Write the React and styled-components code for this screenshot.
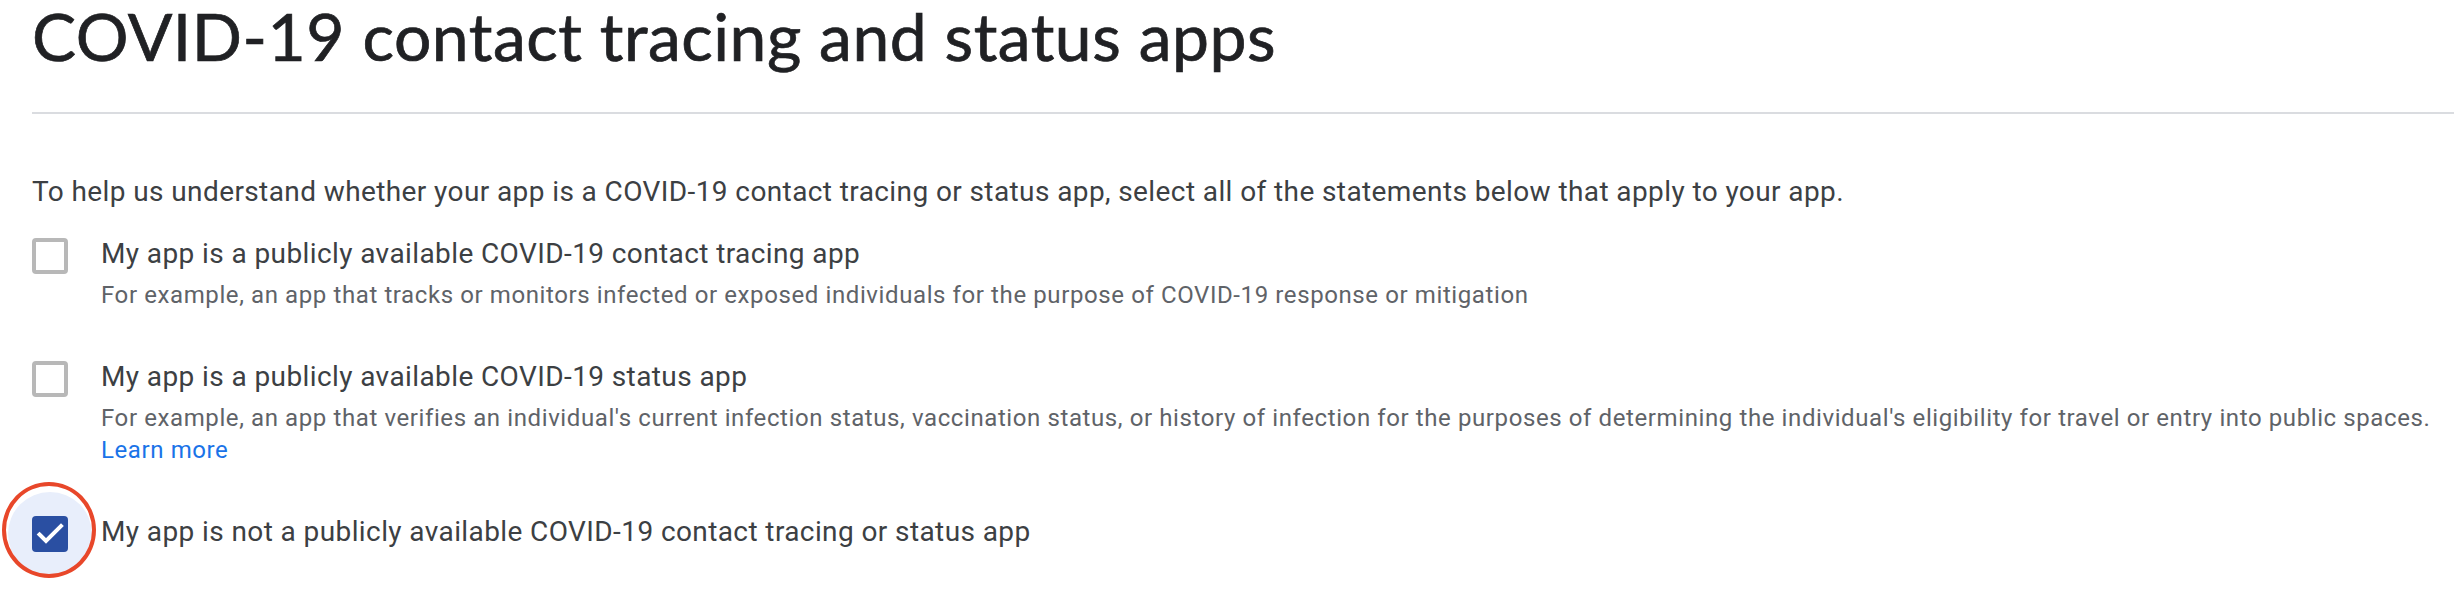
import React from "react";
import styled, { createGlobalStyle } from "styled-components";

const GlobalStyle = createGlobalStyle`
  html, body {
    margin: 0;
    padding: 0;
    background: #ffffff;
  }
  body {
    font-family: Roboto, "Liberation Sans", sans-serif;
  }
`;

const statements = [
  {
    id: "tracing",
    label: "My app is a publicly available COVID-19 contact tracing app",
    description:
      "For example, an app that tracks or monitors infected or exposed individuals for the purpose of COVID-19 response or mitigation",
  },
  {
    id: "status",
    label: "My app is a publicly available COVID-19 status app",
    description:
      "For example, an app that verifies an individual's current infection status, vaccination status, or history of infection for the purposes of determining the individual's eligibility for travel or entry into public spaces.",
    link: "Learn more",
  },
  {
    id: "none",
    label: "My app is not a publicly available COVID-19 contact tracing or status app",
    checked: true,
    highlighted: true,
  },
];

function CheckIcon() {
  return (
    <svg width="36" height="36" viewBox="0 0 36 36" fill="none">
      <path
        d="M7.5 18.5 L14 25 L29 10"
        stroke="#ffffff"
        strokeWidth="4"
        strokeLinecap="square"
      />
    </svg>
  );
}

export default function App() {
  return (
    <Page>
      <GlobalStyle />
      <Title>COVID-19 contact tracing and status apps</Title>
      <Divider />
      <Intro>
        To help us understand whether your app is a COVID-19 contact tracing or status app,
        select all of the statements below that apply to your app.
      </Intro>
      <List>
        {statements.map((s) => (
          <Row key={s.id}>
            <BoxCell>
              {s.highlighted && <Halo />}
              <Box $checked={s.checked}>{s.checked && <CheckIcon />}</Box>
              {s.highlighted && <Marker />}
            </BoxCell>
            <Text>
              <Label>{s.label}</Label>
              {s.description && (
                <Description>
                  {s.description}
                  {s.link && (
                    <>
                      <br />
                      <Link href="#">{s.link}</Link>
                    </>
                  )}
                </Description>
              )}
            </Text>
          </Row>
        ))}
      </List>
    </Page>
  );
}

const Page = styled.div`
  box-sizing: border-box;
  min-height: 608px;
  padding-left: 32px;
  width: 2454px;
`;

const Title = styled.h1`
  margin: 0;
  font-family: Lato, "Open Sans", sans-serif;
  font-weight: 400;
  font-size: 66px;
  line-height: 72px;
  letter-spacing: 0.5px;
  color: #202124;
  -webkit-text-stroke: 0.7px #202124;
`;

const Divider = styled.div`
  margin-top: 40px;
  height: 2px;
  background: #dadce0;
`;

const Intro = styled.p`
  margin: 58px 0 0;
  font-size: 28px;
  line-height: 40px;
  letter-spacing: 0.4px;
  color: #3c4043;
`;

const List = styled.div`
  margin-top: 22px;
  display: flex;
  flex-direction: column;
  gap: 46px;
`;

const Row = styled.div`
  display: flex;
  align-items: flex-start;
  gap: 33px;
`;

const BoxCell = styled.div`
  position: relative;
  width: 36px;
  height: 36px;
  margin-top: 4px;
  flex: none;
`;

const Halo = styled.div`
  position: absolute;
  left: -24px;
  top: -24px;
  width: 84px;
  height: 84px;
  border-radius: 50%;
  background: #e8eefb;
`;

const Marker = styled.div`
  position: absolute;
  left: -30px;
  top: -34px;
  width: 86px;
  height: 88px;
  border: 4px solid #e8472a;
  border-radius: 50%;
  pointer-events: none;
`;

const Box = styled.div`
  position: relative;
  box-sizing: border-box;
  width: 36px;
  height: 36px;
  border-radius: 4px;
  border: ${(p) => (p.$checked ? "none" : "4px solid #b8b8b8")};
  background: ${(p) => (p.$checked ? "#2a4fa2" : "#ffffff")};
  display: flex;
  align-items: center;
  justify-content: center;
`;

const Text = styled.div`
  display: flex;
  flex-direction: column;
`;

const Label = styled.div`
  font-size: 28px;
  line-height: 40px;
  letter-spacing: 0.4px;
  color: #3c4043;
`;

const Description = styled.div`
  margin-top: 5px;
  font-size: 24px;
  line-height: 32px;
  letter-spacing: 0.6px;
  color: #5f6368;
`;

const Link = styled.a`
  color: #1a73e8;
  text-decoration: none;
`;
